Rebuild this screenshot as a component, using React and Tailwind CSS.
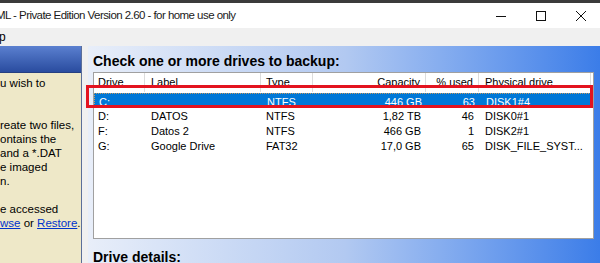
import React from 'react';

const cols = 'grid grid-cols-[51px_116px_52px_113px_53px_112px]';

const drives = [
  { drive: 'C:', label: '', type: 'NTFS', cap: '446 GB', used: '63', phys: 'DISK1#4', selected: true },
  { drive: 'D:', label: 'DATOS', type: 'NTFS', cap: '1,82 TB', used: '46', phys: 'DISK0#1' },
  { drive: 'F:', label: 'Datos 2', type: 'NTFS', cap: '466 GB', used: '1', phys: 'DISK2#1' },
  { drive: 'G:', label: 'Google Drive', type: 'FAT32', cap: '17,0 GB', used: '65', phys: 'DISK_FILE_SYST...' },
];

const App = () => {
  return (
    <div className="w-[600px] h-[263px] overflow-hidden flex flex-col bg-[#f0f0f0] font-['Liberation_Sans',Arial,sans-serif] text-black">
      {/* Window top edge */}
      <div className="h-[3px] bg-[#3b3b3b]" />

      {/* Title bar */}
      <div className="h-[25px] bg-white flex items-center justify-between">
        <span className="-ml-[4px] text-[11.5px] tracking-[-0.55px] whitespace-nowrap text-[#1a1a1a]">
          ML - Private Edition Version 2.60 - for home use only
        </span>
        <div className="flex h-full -mr-[1px]">
          <div className="w-[40px] flex items-center justify-center">
            <svg width="10" height="10" viewBox="0 0 10 10"><path d="M0 5.5h10" stroke="#111" strokeWidth="1" /></svg>
          </div>
          <div className="w-[40px] flex items-center justify-center">
            <svg width="10" height="10" viewBox="0 0 10 10"><rect x="0.5" y="0.5" width="9" height="9" fill="none" stroke="#111" strokeWidth="1" /></svg>
          </div>
          <div className="w-[40px] flex items-center justify-center">
            <svg width="10" height="10" viewBox="0 0 10 10"><path d="M0 0L10 10M10 0L0 10" stroke="#111" strokeWidth="1" /></svg>
          </div>
        </div>
      </div>

      {/* Menu bar */}
      <div className="h-[18px] flex items-center text-[12px]">
        <span className="-ml-[1px]">p</span>
      </div>

      {/* Body */}
      <div className="flex-1 flex min-h-0">
        {/* Left info panel */}
        <div className="w-[82px] shrink-0 flex flex-col border-r border-[#5c6f99] bg-[#eee8c8]">
          <div className="h-[27px] bg-gradient-to-b from-[#5b80d0] to-[#2a4c9f] border-b border-[#253f80]" />
          <div className="pt-[3px] text-[11.5px] leading-[14px] whitespace-nowrap">
            <div>u wish to</div>
            <div>&nbsp;</div>
            <div>&nbsp;</div>
            <div>reate two files,</div>
            <div>ontains the</div>
            <div>and a *.DAT</div>
            <div>e imaged</div>
            <div>n.</div>
            <div>&nbsp;</div>
            <div>e accessed</div>
            <div>
              <span className="text-[#0033cc] underline">wse</span> or{' '}
              <span className="text-[#0033cc] underline">Restore</span>.
            </div>
          </div>
        </div>

        <div className="w-[6px] shrink-0" />

        {/* Main panel */}
        <div className="flex-1 bg-gradient-to-r from-[#e8eef9] via-[#b2c9f1] to-[#3a7ce8] pl-[5px] pr-[8px] pt-[7px] relative">
          <div className="text-[14px] font-bold leading-[17px]">Check one or more drives to backup:</div>

          {/* List box */}
          <div className="mt-[2px] h-[167px] bg-white border border-[#a0a0a0] text-[11px]">
            <div className={`${cols} h-[19px] items-center bg-white`}>
              <div className="pl-[4px] border-r border-[#dcdcdc] h-full flex items-center">Drive</div>
              <div className="pl-[6px] border-r border-[#dcdcdc] h-full flex items-center">Label</div>
              <div className="pl-[5px] border-r border-[#dcdcdc] h-full flex items-center">Type</div>
              <div className="pr-[5px] border-r border-[#dcdcdc] h-full flex items-center justify-end">Capacity</div>
              <div className="pr-[5px] border-r border-[#dcdcdc] h-full flex items-center justify-end">% used</div>
              <div className="pl-[6px] border-r border-[#dcdcdc] h-full flex items-center">Physical drive</div>
            </div>
            <div className="mt-[1px]">
              {drives.map((d) => (
                <div
                  key={d.drive}
                  className={`${cols} h-[15px] items-center ${d.selected ? 'bg-[#0078d7] text-white border border-dotted border-[#c89a60]' : ''}`}
                >
                  <div className="pl-[4px]">{d.drive}</div>
                  <div className="pl-[6px] whitespace-nowrap">{d.label}</div>
                  <div className="pl-[5px]">{d.type}</div>
                  <div className="pr-[5px] text-right">{d.cap}</div>
                  <div className="pr-[5px] text-right">{d.used}</div>
                  <div className="pl-[6px] whitespace-nowrap">{d.phys}</div>
                </div>
              ))}
            </div>
          </div>

          <div className="mt-[10px] text-[14px] font-bold leading-[17px]">Drive details:</div>

          {/* Red highlight annotation */}
          <div className="absolute left-[-2px] top-[39px] w-[507px] h-[23px] border-[3px] border-[#e3131f]" />
        </div>
      </div>
    </div>
  );
};

export default App;
